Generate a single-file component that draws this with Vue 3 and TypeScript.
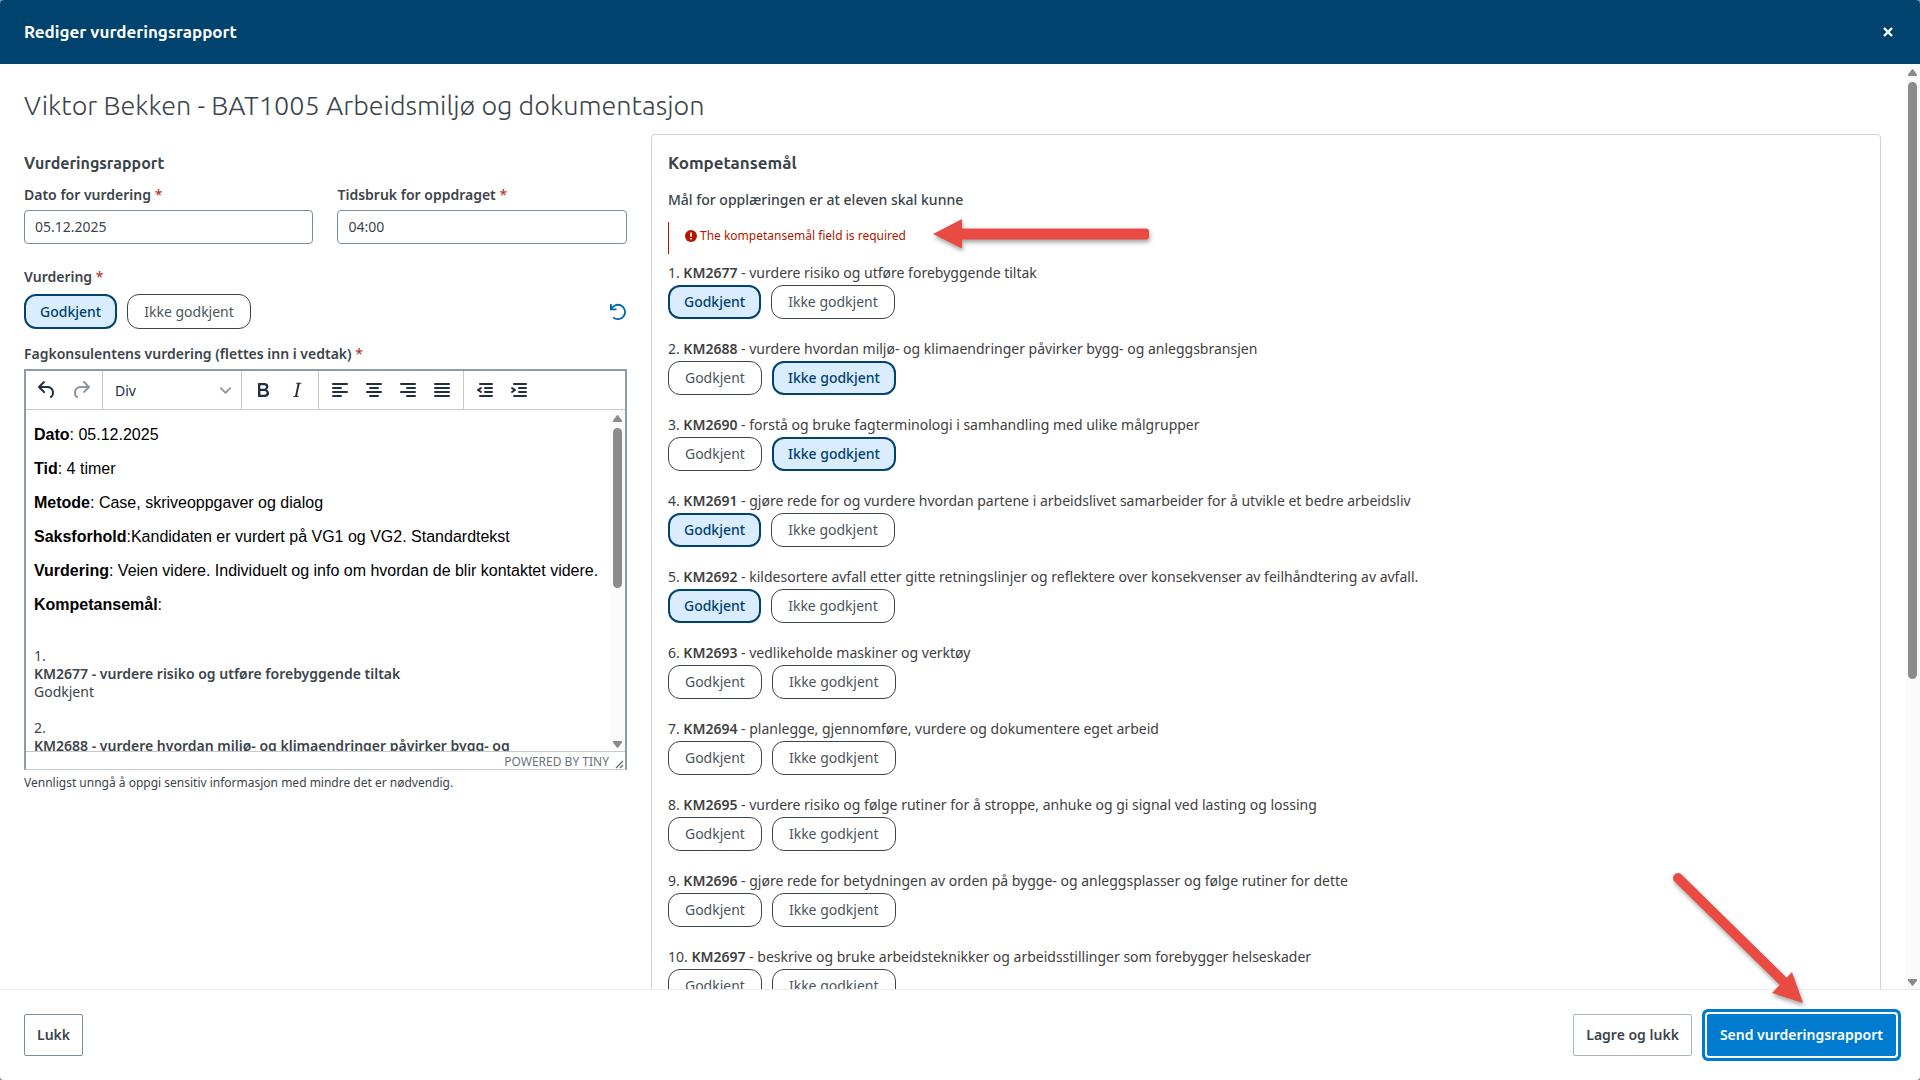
<script setup lang="ts">
import { reactive, ref } from 'vue'

type Verdict = 'ok' | 'no' | null

interface Goal {
  code: string
  text: string
  verdict: Verdict
}

const date = ref('05.12.2025')
const time = ref('04:00')
const overall = ref<Verdict>('ok')

const choices: { value: 'ok' | 'no'; label: string }[] = [
  { value: 'ok', label: 'Godkjent' },
  { value: 'no', label: 'Ikke godkjent' },
]

const goals = reactive<Goal[]>([
  { code: 'KM2677', text: 'vurdere risiko og utføre forebyggende tiltak', verdict: 'ok' },
  { code: 'KM2688', text: 'vurdere hvordan miljø- og klimaendringer påvirker bygg- og anleggsbransjen', verdict: 'no' },
  { code: 'KM2690', text: 'forstå og bruke fagterminologi i samhandling med ulike målgrupper', verdict: 'no' },
  { code: 'KM2691', text: 'gjøre rede for og vurdere hvordan partene i arbeidslivet samarbeider for å utvikle et bedre arbeidsliv', verdict: 'ok' },
  { code: 'KM2692', text: 'kildesortere avfall etter gitte retningslinjer og reflektere over konsekvenser av feilhåndtering av avfall.', verdict: 'ok' },
  { code: 'KM2693', text: 'vedlikeholde maskiner og verktøy', verdict: null },
  { code: 'KM2694', text: 'planlegge, gjennomføre, vurdere og dokumentere eget arbeid', verdict: null },
  { code: 'KM2695', text: 'vurdere risiko og følge rutiner for å stroppe, anhuke og gi signal ved lasting og lossing', verdict: null },
  { code: 'KM2696', text: 'gjøre rede for betydningen av orden på bygge- og anleggsplasser og følge rutiner for dette', verdict: null },
  { code: 'KM2697', text: 'beskrive og bruke arbeidsteknikker og arbeidsstillinger som forebygger helseskader', verdict: null },
])

const facts = [
  { label: 'Dato', text: ': 05.12.2025' },
  { label: 'Tid', text: ': 4 timer' },
  { label: 'Metode', text: ': Case, skriveoppgaver og dialog' },
  { label: 'Saksforhold', text: ':Kandidaten er vurdert på VG1 og VG2. Standardtekst' },
  { label: 'Vurdering', text: ': Veien videre. Individuelt og info om hvordan de blir kontaktet videre.' },
  { label: 'Kompetansemål', text: ':' },
]

interface Tool {
  name: string
  path: string
  off?: boolean
}

const bar = (x: number, y: number, w: number) => `M${x} ${y}h${w}a1 1 0 0 1 0 2H${x}a1 1 0 0 1 0-2Z`

const history: Tool[] = [
  { name: 'Angre', path: 'M6.4 8H12c3.7 0 6.2 2 6.8 5.1.6 2.7-.4 5.6-2.3 6.8a1 1 0 0 1-1-1.8c1.1-.6 1.8-2.7 1.4-4.6-.5-2.1-2.1-3.5-4.9-3.5H6.4l3.3 3.3a1 1 0 1 1-1.4 1.4l-5-5a1 1 0 0 1 0-1.4l5-5a1 1 0 0 1 1.4 1.4L6.4 8Z' },
  { name: 'Gjør om', off: true, path: 'M17.6 10H12c-2.8 0-4.4 1.4-4.9 3.5-.4 2 .3 4 1.4 4.6a1 1 0 1 1-1 1.8c-2-1.2-2.9-4.1-2.3-6.8.6-3 3-5.1 6.8-5.1h5.6l-3.3-3.3a1 1 0 1 1 1.4-1.4l5 5a1 1 0 0 1 0 1.4l-5 5a1 1 0 0 1-1.4-1.4l3.3-3.3Z' },
]

const toolGroups: Tool[][] = [
  [
    { name: 'Fet', path: 'M7.8 19c-.3 0-.5 0-.6-.2l-.2-.5V5.7c0-.2 0-.4.2-.5l.6-.2h5c1.5 0 2.7.3 3.5 1 .7.6 1.1 1.4 1.1 2.5a3 3 0 0 1-.6 1.9c-.4.6-1 1-1.6 1.2.4.1.9.3 1.3.6s.8.7 1 1.2c.4.4.5 1 .5 1.6 0 1.3-.4 2.3-1.3 3-.8.7-2.1 1-3.8 1H7.8Zm5-8.3c.6 0 1.2-.1 1.6-.5.4-.3.6-.7.6-1.3 0-1.1-.8-1.7-2.3-1.7H9.3v3.5h3.4Zm.5 6c.7 0 1.3-.1 1.7-.4.4-.4.6-.9.6-1.5s-.2-1-.7-1.4c-.4-.3-1-.4-2-.4H9.4v3.8h4Z' },
    { name: 'Kursiv', path: 'm16.7 4.7-.1.9h-.3c-.6 0-1 0-1.4.3-.3.3-.4.6-.5 1.1l-2.1 9.8v.6c0 .5.4.8 1.4.8h.2l-.2.8H8l.2-.8h.2c1.1 0 1.8-.5 2-1.5l2-9.8.1-.5c0-.6-.4-.8-1.4-.8h-.3l.2-.9h5.8Z' },
  ],
  [
    { name: 'Venstrejuster', path: bar(5, 5, 14) + bar(5, 9, 8) + bar(5, 13, 14) + bar(5, 17, 8) },
    { name: 'Midtstill', path: bar(5, 5, 14) + bar(8, 9, 8) + bar(5, 13, 14) + bar(8, 17, 8) },
    { name: 'Høyrejuster', path: bar(5, 5, 14) + bar(11, 9, 8) + bar(5, 13, 14) + bar(11, 17, 8) },
    { name: 'Blokkjuster', path: bar(5, 5, 14) + bar(5, 9, 14) + bar(5, 13, 14) + bar(5, 17, 14) },
  ],
  [
    { name: 'Mindre innrykk', path: bar(7, 5, 12) + bar(12, 9, 7) + bar(12, 13, 7) + bar(7, 17, 12) + 'M8.6 13.2a1 1 0 0 1-1.2 1.6l-3-2a1 1 0 0 1 0-1.6l3-2a1 1 0 0 1 1.2 1.6L6.8 12l1.8 1.2Z' },
    { name: 'Større innrykk', path: bar(7, 5, 12) + bar(12, 9, 7) + bar(12, 13, 7) + bar(7, 17, 12) + 'M4.4 13.2 6.2 12l-1.8-1.2a1 1 0 0 1 1.2-1.6l3 2a1 1 0 0 1 0 1.6l-3 2a1 1 0 1 1-1.2-1.6Z' },
  ],
]
</script>

<template>
  <div class="modal">
    <header class="top">
      <h1>Rediger vurderingsrapport</h1>
      <button type="button" class="close" aria-label="Lukk vindu">
        <svg width="10" height="10" viewBox="0 0 10 10"><path d="M1 1l8 8M9 1l-8 8" stroke="#fff" stroke-width="2.4" /></svg>
      </button>
    </header>

    <div class="body">
      <main class="content">
        <h2>Viktor Bekken - BAT1005 Arbeidsmiljø og dokumentasjon</h2>
        <div class="columns">
          <section class="report">
            <h3>Vurderingsrapport</h3>
            <div class="fields">
              <div class="field">
                <label for="date">Dato for vurdering <span class="req">*</span></label>
                <input id="date" v-model="date" type="text" />
              </div>
              <div class="field">
                <label for="time">Tidsbruk for oppdraget <span class="req">*</span></label>
                <input id="time" v-model="time" type="text" />
              </div>
            </div>

            <p id="overall" class="label spaced">Vurdering <span class="req">*</span></p>
            <div class="choices main-choice" role="group" aria-labelledby="overall">
              <button
                v-for="c in choices"
                :key="c.value"
                type="button"
                class="choice"
                :class="{ on: overall === c.value }"
                :aria-pressed="overall === c.value"
                @click="overall = c.value"
              >{{ c.label }}</button>
              <button type="button" class="reset" aria-label="Nullstill" @click="overall = null">
                <svg width="18" height="18" viewBox="0 0 18 18" fill="none" stroke="#0067ab" stroke-width="1.8">
                  <path d="M1.900 1v5.300h5.600M2.300 6a7.200 7.200 0 1 1 1.800 8.400" />
                </svg>
              </button>
            </div>

            <p id="assess" class="label">Fagkonsulentens vurdering (flettes inn i vedtak) <span class="req">*</span></p>
            <div class="editor">
              <div class="toolbar">
                <div class="tools">
                  <button v-for="t in history" :key="t.name" type="button" class="tool" :class="{ off: t.off }" :disabled="t.off" :aria-label="t.name">
                    <svg width="24" height="24" viewBox="0 0 24 24"><path :d="t.path" /></svg>
                  </button>
                </div>
                <div class="tools format">
                  <select aria-label="Format"><option>Div</option></select>
                  <svg width="11" height="11" viewBox="0 0 10 10"><path d="M8.7 2.2c.3-.3.8-.3 1 0 .4.4.4.9 0 1.200L5.700 7.800c-.3.3-.9.3-1.200 0L.2 3.400a.8.8 0 0 1 0-1.200c.3-.3.8-.3 1.100 0L5 6l3.700-3.800Z" /></svg>
                </div>
                <div v-for="(g, i) in toolGroups" :key="i" class="tools">
                  <button v-for="t in g" :key="t.name" type="button" class="tool" :aria-label="t.name">
                    <svg width="24" height="24" viewBox="0 0 24 24"><path fill-rule="evenodd" :d="t.path" /></svg>
                  </button>
                </div>
              </div>
              <div class="page">
                <div class="text" contenteditable="true" role="textbox" aria-multiline="true" aria-labelledby="assess">
                  <p v-for="f in facts" :key="f.label" class="fact"><strong>{{ f.label }}</strong>{{ f.text }}</p>
                  <div class="entry">
                    <div>1.</div>
                    <div class="name">KM2677 - vurdere risiko og utføre forebyggende tiltak</div>
                    <div>Godkjent</div>
                  </div>
                  <div class="entry">
                    <div>2.</div>
                    <div class="name">KM2688 - vurdere hvordan miljø- og klimaendringer påvirker bygg- og</div>
                  </div>
                </div>
                <div class="scroll" aria-hidden="true">
                  <svg width="9" height="7" viewBox="0 0 9 7"><path d="M3.800.5q.7-.8 1.400 0L9 5.500V7H0V5.500Z" fill="#8b8b8b" /></svg>
                  <div class="track"><i class="thumb short"></i></div>
                  <svg width="9" height="7" viewBox="0 0 9 7"><path d="M3.800 6.500q.7.800 1.400 0L9 1.500V0H0V1.500Z" fill="#8b8b8b" /></svg>
                </div>
              </div>
              <div class="status">
                <span>POWERED BY TINY</span>
                <svg width="9" height="9" viewBox="0 0 9 9"><path d="M1 8l7-7M5 8l3-3" stroke="#5b6672" stroke-width="1.300" /></svg>
              </div>
            </div>
            <p class="help">Vennligst unngå å oppgi sensitiv informasjon med mindre det er nødvendig.</p>
          </section>

          <section class="goals">
            <h3 class="large">Kompetansemål</h3>
            <p class="label lead">Mål for opplæringen er at eleven skal kunne</p>
            <div class="error" role="alert">
              <svg width="12" height="12" viewBox="0 0 12 12"><circle cx="6" cy="6" r="6" fill="#b01600" /><path d="M6 2.500v4.200M6 8v1.600" stroke="#fff" stroke-width="1.600" /></svg>
              <span>The kompetansemål field is required</span>
              <svg class="arrow-left" width="226" height="42" viewBox="0 0 226 42" aria-hidden="true">
                <path d="M4 19 33 4v9.500h184q3 0 3 3v5q0 3-3 3H33V33.500Z" fill="#e94b43" />
              </svg>
            </div>
            <ol>
              <li v-for="(g, i) in goals" :key="g.code">
                <p :id="g.code">{{ i + 1 }}. <b>{{ g.code }}</b> - {{ g.text }}</p>
                <div class="choices" role="group" :aria-labelledby="g.code">
                  <button
                    v-for="c in choices"
                    :key="c.value"
                    type="button"
                    class="choice"
                    :class="{ on: g.verdict === c.value }"
                    :aria-pressed="g.verdict === c.value"
                    @click="g.verdict = c.value"
                  >{{ c.label }}</button>
                </div>
              </li>
            </ol>
          </section>
        </div>
      </main>
      <div class="scroll" aria-hidden="true">
        <svg width="9" height="7" viewBox="0 0 9 7"><path d="M3.800.5q.7-.8 1.400 0L9 5.500V7H0V5.500Z" fill="#8b8b8b" /></svg>
        <div class="track"><i class="thumb"></i></div>
        <svg width="9" height="7" viewBox="0 0 9 7"><path d="M3.800 6.500q.7.800 1.400 0L9 1.500V0H0V1.500Z" fill="#8b8b8b" /></svg>
      </div>
    </div>

    <footer class="bottom">
      <button type="button" class="action">Lukk</button>
      <span class="grow"></span>
      <button type="button" class="action pale">Lagre og lukk</button>
      <div class="send-wrap">
        <button type="button" class="action send">Send vurderingsrapport</button>
        <svg class="arrow-down" width="144" height="144" viewBox="0 0 144 144" aria-hidden="true">
          <path d="M10 10 122 120" stroke="#e94b43" stroke-width="10" stroke-linecap="round" />
          <path d="M124 104 135 135 104 125Z" fill="#e94b43" />
        </svg>
      </div>
    </footer>
  </div>
</template>

<style>
body {
  margin: 0;
  background: #7f8c96;
}
</style>

<style scoped>
* {
  box-sizing: border-box;
}
h1,
h2,
h3,
p,
ol {
  margin: 0;
  padding: 0;
}
button,
input,
select {
  font: inherit;
  color: inherit;
}
.modal {
  display: flex;
  flex-direction: column;
  height: 100vh;
  border-radius: 4px;
  overflow: hidden;
  background: #fff;
  color: #3b444b;
  font-family: "Noto Sans", sans-serif;
  font-size: 14px;
  line-height: 20px;
}
.top {
  flex: none;
  display: flex;
  align-items: center;
  justify-content: space-between;
  height: 64px;
  padding: 0 24px;
  background: #00436e;
}
h1 {
  color: #fff;
  font-family: Ubuntu, "Noto Sans", sans-serif;
  font-size: 17px;
  font-weight: 700;
}
.close {
  display: flex;
  padding: 3px;
  border: 0;
  background: none;
}
.body {
  flex: 1;
  min-height: 0;
  display: flex;
}
.content {
  flex: 1;
  min-width: 0;
  padding: 20px 24px 0;
  overflow: hidden;
}
h2 {
  margin-bottom: 8px;
  font-family: Ubuntu, "Noto Sans", sans-serif;
  font-size: 27px;
  font-weight: 300;
  line-height: 42px;
}
.columns {
  display: grid;
  grid-template-columns: 100fr 204fr;
  gap: 24px;
}
h3 {
  margin-bottom: 10px;
  font-family: Ubuntu, "Noto Sans", sans-serif;
  font-size: 16px;
  font-weight: 600;
  line-height: 24px;
}
h3.large {
  font-size: 17px;
}
.report {
  min-width: 0;
  padding-top: 17px;
}
.fields {
  display: grid;
  grid-template-columns: 1fr 1fr;
  gap: 24px;
}
label,
.label {
  display: block;
  font-weight: 600;
}
.lead.label {
  font-weight: 500;
}
.req {
  color: #b3261e;
  font-weight: 400;
}
.field input {
  width: 100%;
  height: 34px;
  margin-top: 5px;
  padding: 0 10px 2px;
  border: 1px solid #7c8d9d;
  border-radius: 4px;
  background: #fff;
  display: block;
}
.spaced {
  margin-top: 23px;
}
.choices {
  display: flex;
  gap: 10px;
}
.main-choice {
  height: 35px;
  margin: 7px 0 15px;
}
.choice {
  height: 34px;
  padding: 0 16px;
  border: 1px solid #3b444b;
  border-radius: 12px;
  background: #fff;
  color: #4c555c;
  line-height: 20px;
}
.main-choice .choice {
  height: 35px;
}
.choice.on {
  padding: 0 14px;
  border: 2px solid #00436e;
  background: #daecff;
  color: #00436e;
  font-weight: 500;
}
.reset {
  display: flex;
  align-items: center;
  margin-left: auto;
  padding: 0;
  border: 0;
  background: none;
}
.editor {
  display: flex;
  flex-direction: column;
  height: 401px;
  margin-top: 5px;
  border: 2px solid #8e9bab;
  border-bottom: 1px solid #c4c9ce;
}
.toolbar {
  flex: none;
  display: flex;
  height: 39px;
  border-bottom: 1px solid #c8c8c8;
}
.tools {
  display: flex;
  align-items: center;
  padding: 0 4px;
  border-right: 1px solid #c8c8c8;
}
.tools:last-child {
  border-right: 0;
}
.tool {
  display: flex;
  justify-content: center;
  width: 34px;
  padding: 0;
  border: 0;
  background: none;
  fill: #222f3e;
}
.tool.off {
  opacity: 0.5;
}
.format {
  width: 139px;
  padding: 0 10px 0 12px;
  fill: #8c929a;
}
.format select {
  flex: 1;
  min-width: 0;
  padding: 2px 0 0;
  border: 0;
  appearance: none;
  background: none;
  color: #222f3e;
}
.page {
  flex: 1;
  min-height: 0;
  display: flex;
}
.text {
  flex: 1;
  min-width: 0;
  padding-left: 8px;
  overflow: hidden;
  line-height: 18px;
}
.fact {
  margin: 16px 0;
  color: #000;
  font-family: "Liberation Sans", Arial, sans-serif;
  font-size: 16px;
  white-space: nowrap;
}
.entry {
  margin-top: 18px;
}
.fact + .entry {
  margin-top: 33px;
}
.name {
  font-weight: 600;
}
.scroll {
  flex: none;
  display: flex;
  flex-direction: column;
  align-items: center;
  width: 15px;
  padding: 5px 0 3px;
  background: #fbfbfb;
}
.track {
  flex: 1;
  width: 9px;
  padding: 6px 0;
}
.thumb {
  display: block;
  height: 67%;
  border-radius: 5px;
  background: #8b8b8b;
}
.thumb.short {
  height: 52%;
}
.status {
  flex: none;
  display: flex;
  justify-content: flex-end;
  align-items: center;
  gap: 6px;
  height: 18px;
  padding: 3px 1px 0 0;
  border-top: 1px solid #c8c8c8;
  color: #6a727c;
  font-size: 12px;
}
.status svg {
  align-self: flex-end;
}
.help {
  margin-top: 3px;
  font-size: 12px;
}
.goals {
  min-width: 0;
  padding: 16px;
  border: 1px solid #cdd3d6;
  border-radius: 4px;
}
.lead {
  margin: 15px 0 12px;
}
.error {
  position: relative;
  display: flex;
  align-items: center;
  gap: 3px;
  height: 32px;
  margin-bottom: 9px;
  padding: 0 0 4px 16px;
  border-left: 1px solid #b01600;
  color: #b01600;
  font-size: 12px;
}
.arrow-left {
  position: absolute;
  left: 260px;
  top: -7px;
  filter: drop-shadow(1px 3px 2px rgb(0 0 0 / 35%));
}
ol {
  list-style: none;
  color: #404040;
}
li {
  margin-bottom: 20px;
}
li p {
  margin-bottom: 2px;
}
li b {
  font-weight: 600;
}
.bottom {
  flex: none;
  display: flex;
  align-items: center;
  height: 91px;
  padding: 0 24px;
  border-top: 1px solid #e8eaeb;
}
.grow {
  flex: 1;
}
.action {
  height: 42px;
  padding: 0 12px;
  border: 1px solid #7c8d9d;
  border-radius: 2px;
  background: #fff;
  font-weight: 600;
}
.pale {
  margin-right: 15px;
  border-color: #a8b4bf;
}
.send-wrap {
  position: relative;
}
.send {
  border-color: #007bd0;
  background: #007bd0;
  color: #fff;
  box-shadow: 0 0 0 2px #fff, 0 0 0 5px #007bd0;
}
.arrow-down {
  position: absolute;
  right: 84px;
  bottom: 44px;
  filter: drop-shadow(1px 3px 2px rgb(0 0 0 / 35%));
}
</style>
